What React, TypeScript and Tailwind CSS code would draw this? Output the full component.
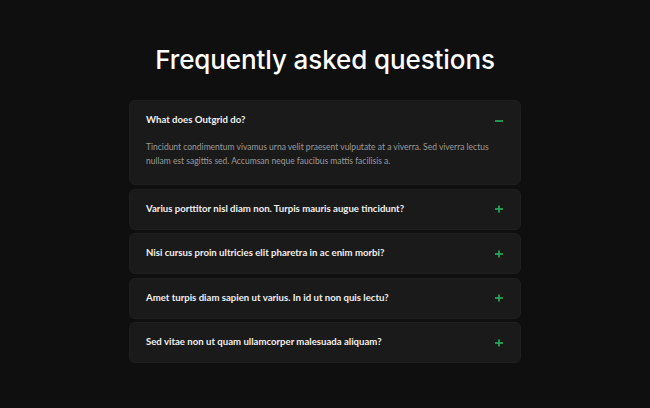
import React, { useState } from "react";

const faqs = [
  {
    q: "What does Outgrid do?",
    a: "Tincidunt condimentum vivamus urna velit praesent vulputate at a viverra. Sed viverra lectus nullam est sagittis sed. Accumsan neque faucibus mattis facilisis a.",
  },
  { q: "Varius porttitor nisl diam non. Turpis mauris augue tincidunt?", a: "" },
  { q: "Nisi cursus proin ultricies elit pharetra in ac enim morbi?", a: "" },
  { q: "Amet turpis diam sapien ut varius. In id ut non quis lectu?", a: "" },
  { q: "Sed vitae non ut quam ullamcorper malesuada aliquam?", a: "" },
];

function Icon({ open }: { open: boolean }) {
  return (
    <svg width="8" height="8" viewBox="0 0 8 8" className="shrink-0">
      <path d="M0 4h8" stroke="#27a95a" strokeWidth="1.7" />
      {!open && <path d="M4 0.5v7" stroke="#27a95a" strokeWidth="1.7" />}
    </svg>
  );
}

export default function App() {
  const [open, setOpen] = useState(0);
  return (
    <div
      className="w-[650px] h-[408px] bg-[#0f0f0f] flex flex-col items-center"
      style={{ fontFamily: "Lato, 'Noto Sans', sans-serif" }}
    >
      <h1
        className="mt-[42px] text-[26px] leading-[36px] font-medium text-white tracking-[-0.1px]"
        style={{ fontFamily: "Inter, sans-serif" }}
      >
        Frequently asked questions
      </h1>
      <div className="mt-[22px] w-[392px] flex flex-col gap-[3.5px]">
        {faqs.map((f, i) => (
          <div key={i} className="bg-[#1a1a1a] rounded-[6px] border border-[#1e1e1e]">
            <button
              onClick={() => setOpen(open === i ? -1 : i)}
              className="w-full h-[39px] flex items-center justify-between pl-[16px] pr-[17px] text-left"
            >
              <span className="text-[9.6px] font-bold text-[#f0f0f0]">{f.q}</span>
              <Icon open={open === i} />
            </button>
            {open === i && (
              <p className="pl-[16px] pr-[12px] pb-[16px] text-[8.5px] leading-[14px] text-[#9a9a9a]">
                {f.a}
              </p>
            )}
          </div>
        ))}
      </div>
    </div>
  );
}
